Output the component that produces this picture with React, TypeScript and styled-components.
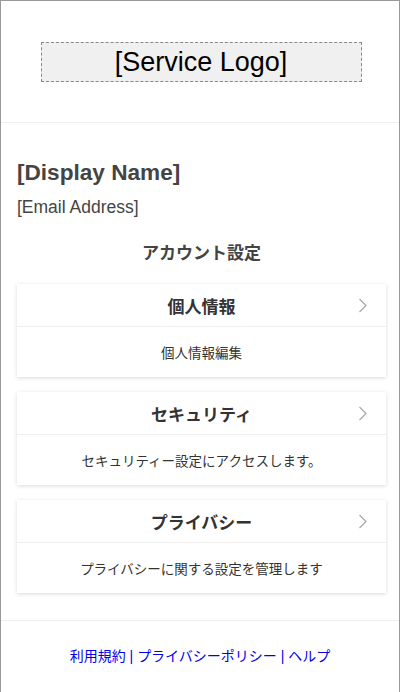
import React from "react";
import styled, { createGlobalStyle } from "styled-components";

const Global = createGlobalStyle`
  html, body { margin: 0; padding: 0; background: #fff; }
  body { font-family: Arial, "Liberation Sans", "Noto Sans CJK JP", sans-serif; }
  * { box-sizing: border-box; }
`;

const Frame = styled.div`
  width: 400px;
  min-height: 700px;
  border: 1px solid #999;
  border-bottom: none;
  background: #fff;
`;

const Header = styled.header`
  height: 122px;
  border-bottom: 1px solid #eee;
  display: flex;
  align-items: center;
  justify-content: center;
`;

const Logo = styled.div`
  width: 321px;
  height: 40px;
  margin: 1px 0 0 2px;
  border: 1px dashed #888;
  background: #f0f0f0;
  display: flex;
  align-items: center;
  justify-content: center;
  font-size: 27px;
  color: #000;
`;

const Main = styled.main`
  padding: 36px 13px 27px 16px;
`;

const DisplayName = styled.h1`
  margin: 0;
  font-size: 22.6px;
  line-height: 28px;
  font-weight: bold;
  color: #444;
`;

const Email = styled.div`
  margin-top: 10px;
  font-size: 17.5px;
  line-height: 21px;
  color: #444;
`;

const SectionTitle = styled.h2`
  margin: 24px 0 0;
  text-align: center;
  font-size: 17px;
  line-height: 24px;
  font-weight: bold;
  color: #444;
`;

const CardList = styled.div`
  margin-top: 18px;
  display: flex;
  flex-direction: column;
  gap: 15px;
`;

const Card = styled.div`
  background: #fff;
  box-shadow: 0 1px 4px rgba(0, 0, 0, 0.15);
`;

const CardHead = styled.div`
  position: relative;
  height: 43px;
  display: flex;
  align-items: center;
  justify-content: center;
  border-bottom: 1px solid #eee;
  font-size: 17px;
  font-weight: bold;
  color: #333;
`;

const Chevron = styled.svg`
  position: absolute;
  right: 18px;
  top: 14px;
`;

const CardBody = styled.div`
  height: 50px;
  display: flex;
  align-items: center;
  justify-content: center;
  font-size: 13.5px;
  color: #333;
`;

const Footer = styled.footer`
  border-top: 1px solid #eee;
  padding: 25px 0;
  text-align: center;
  font-size: 14px;
  line-height: 20px;
  color: #0000ee;
`;

const Link = styled.a`
  color: #0000ee;
  text-decoration: none;
`;

const items = [
  { title: "個人情報", desc: "個人情報編集" },
  { title: "セキュリティ", desc: "セキュリティー設定にアクセスします。" },
  { title: "プライバシー", desc: "プライバシーに関する設定を管理します" },
];

export default function App() {
  return (
    <>
      <Global />
      <Frame>
        <Header>
          <Logo>[Service Logo]</Logo>
        </Header>
        <Main>
          <DisplayName>[Display Name]</DisplayName>
          <Email>[Email Address]</Email>
          <SectionTitle>アカウント設定</SectionTitle>
          <CardList>
            {items.map((it) => (
              <Card key={it.title}>
                <CardHead>
                  {it.title}
                  <Chevron width="10" height="15" viewBox="0 0 10 15">
                    <path d="M1.5 1 L8 7.5 L1.5 14" fill="none" stroke="#aaa" strokeWidth="1.3" />
                  </Chevron>
                </CardHead>
                <CardBody>{it.desc}</CardBody>
              </Card>
            ))}
          </CardList>
        </Main>
        <Footer>
          <Link href="#">利用規約</Link> | <Link href="#">プライバシーポリシー</Link> | <Link href="#">ヘルプ</Link>
        </Footer>
      </Frame>
    </>
  );
}
